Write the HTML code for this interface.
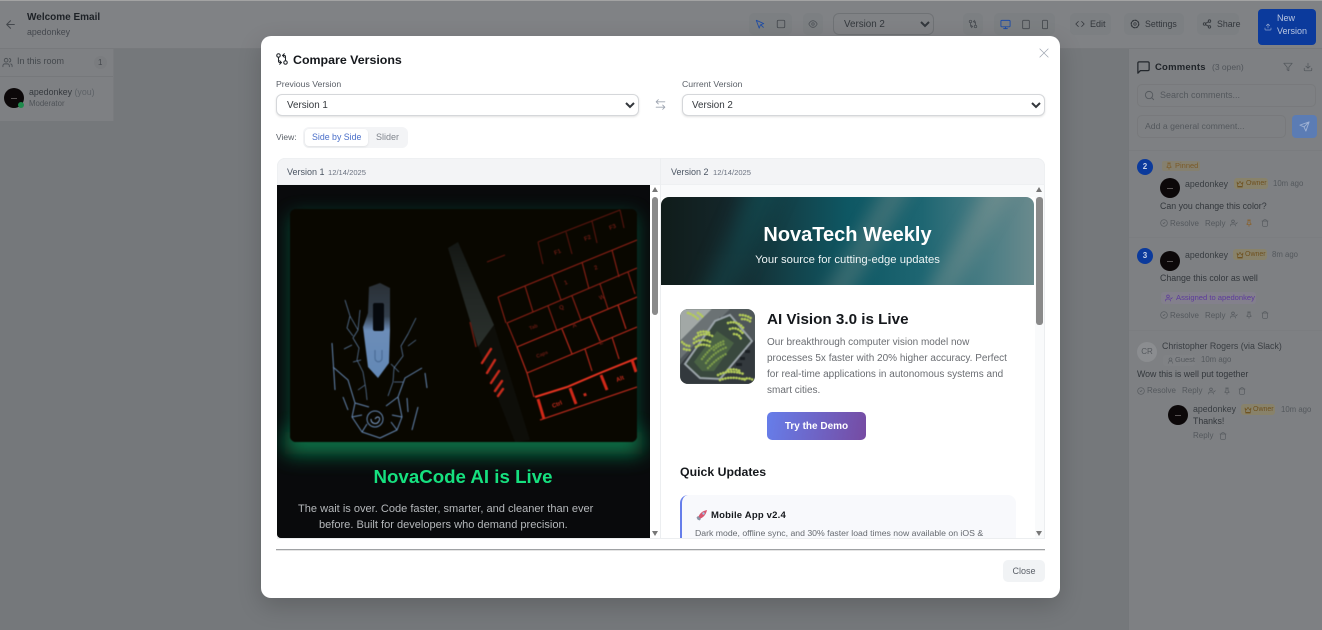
<!DOCTYPE html>
<html><head><meta charset="utf-8"><style>
*{box-sizing:border-box}
html,body{margin:0;padding:0;width:1322px;height:630px;overflow:hidden;background:#75787b;font-family:"Liberation Sans",sans-serif}
.a{position:absolute}
.t{position:absolute;white-space:nowrap;line-height:12px;height:12px}
svg.i{position:absolute;fill:none;stroke:currentColor;stroke-width:2;stroke-linecap:round;stroke-linejoin:round}
.btn{position:absolute;background:#7c7f82;border-radius:5px}
.av{position:absolute;border-radius:50%;background:#0c0809}
.av:after{content:"";position:absolute;left:37%;top:48%;width:26%;height:5%;background:#5a5555}
.owner{position:absolute;height:11px;background:#88826a;border-radius:3px;font-size:7px;line-height:11px;color:#6f5220;padding-left:12px;white-space:nowrap}
</style></head><body>
<svg width="0" height="0" style="position:absolute"><defs>
<symbol id="compare" viewBox="0 0 24 24"><circle cx="18" cy="18" r="3"/><circle cx="6" cy="6" r="3"/><path d="M13 6h3a2 2 0 0 1 2 2v7"/><path d="M11 18H8a2 2 0 0 1-2-2V9"/><path d="M16 3l-3 3 3 3M8 21l3-3-3-3"/></symbol>
<symbol id="user" viewBox="0 0 24 24"><path d="M16 21v-2a4 4 0 0 0-4-4H6a4 4 0 0 0-4 4v2"/><circle cx="9" cy="7" r="4"/><path d="M22 11l-3 3-2-2"/></symbol>
<symbol id="pin" viewBox="0 0 24 24"><path d="M12 17v5M9 10.8V4h6v6.8l3 3.2v3H6v-3zM8 3h8"/></symbol>
<symbol id="trash" viewBox="0 0 24 24"><path d="M3 6h18M19 6v14a2 2 0 0 1-2 2H7a2 2 0 0 1-2-2V6M8 6V4a2 2 0 0 1 2-2h4a2 2 0 0 1 2 2v2"/></symbol>
<symbol id="check" viewBox="0 0 24 24"><circle cx="12" cy="12" r="10"/><path d="M9 12l2 2 4-4"/></symbol>
<symbol id="crown" viewBox="0 0 24 24"><path d="M3 6l4 6 5-8 5 8 4-6-2 13H5zM5 21h14"/></symbol>
</defs></svg>

<!-- page behind -->
<div class="a" style="left:0;top:0;width:1322px;height:49px;background:#808285;border-top:1.5px solid #a3a3a3;border-bottom:1px solid #77797c"></div>
<svg class="i" style="left:4px;top:18px;color:#44484d" width="13" height="13" viewBox="0 0 24 24"><path d="M19 12H5M12 19l-7-7 7-7"/></svg>
<div class="t" style="left:27px;top:12px;font-size:10px;font-weight:bold;color:#1d2126">Welcome Email</div>
<div class="t" style="left:27px;top:26px;font-size:8.8px;color:#44484e">apedonkey</div>

<div class="btn" style="left:749px;top:13px;width:43px;height:22px"></div>
<svg class="i" style="left:755px;top:19px;color:#1e4ca6" width="10" height="10" viewBox="0 0 24 24"><path d="M3 3l7 19 3-8 8-3zM14 14l6 6"/></svg>
<svg class="i" style="left:776px;top:19px;color:#44484d" width="10" height="10" viewBox="0 0 24 24"><rect x="3" y="3" width="18" height="18" rx="3"/></svg>
<div class="btn" style="left:803px;top:13px;width:20px;height:22px"></div>
<svg class="i" style="left:808px;top:19px;color:#4f5358" width="10" height="10" viewBox="0 0 24 24"><path d="M2 12s4-8 10-8 10 8 10 8-4 8-10 8-10-8-10-8z"/><circle cx="12" cy="12" r="3"/></svg>
<select class="a" style="left:833px;top:13px;width:101px;height:22px;background:#808285;border:1px solid #6f7275;border-radius:6px;color:#33373c;font:9.8px 'Liberation Sans',sans-serif;padding-left:6px"><option>Version 2</option></select>
<div class="btn" style="left:963px;top:13px;width:20px;height:22px"></div>
<svg class="i" style="left:968px;top:19px;color:#4a4e53" width="10" height="10"><use href="#compare"/></svg>
<div class="btn" style="left:994px;top:13px;width:61px;height:22px"></div>
<svg class="i" style="left:1000px;top:19px;color:#1e4ca6" width="11" height="11" viewBox="0 0 24 24"><rect x="2" y="3" width="20" height="14" rx="2"/><path d="M8 21h8M12 17v4"/></svg>
<svg class="i" style="left:1021px;top:19px;color:#44484d" width="10" height="11" viewBox="0 0 24 24"><rect x="4" y="2" width="16" height="20" rx="2"/></svg>
<svg class="i" style="left:1040px;top:19px;color:#44484d" width="10" height="11" viewBox="0 0 24 24"><rect x="6" y="2" width="12" height="20" rx="2"/></svg>
<div class="btn" style="left:1070px;top:13px;width:41px;height:22px"></div>
<svg class="i" style="left:1075px;top:19px;color:#33373c" width="10" height="10" viewBox="0 0 24 24"><path d="M8 6l-6 6 6 6M16 6l6 6-6 6"/></svg>
<div class="t" style="left:1090px;top:17.5px;font-size:9px;color:#33373c">Edit</div>
<div class="btn" style="left:1124px;top:13px;width:60px;height:22px"></div>
<svg class="i" style="left:1130px;top:19px;color:#33373c;stroke-width:1.6" width="10" height="10" viewBox="0 0 24 24"><circle cx="12" cy="12" r="3"/><circle cx="12" cy="12" r="9" stroke-dasharray="4 3" stroke-width="3"/></svg>
<div class="t" style="left:1145px;top:17.5px;font-size:8.8px;color:#33373c">Settings</div>
<div class="btn" style="left:1197px;top:13px;width:42px;height:22px"></div>
<svg class="i" style="left:1202px;top:19px;color:#33373c" width="10" height="10" viewBox="0 0 24 24"><circle cx="18" cy="5" r="3"/><circle cx="6" cy="12" r="3"/><circle cx="18" cy="19" r="3"/><path d="M8.6 13.5l6.8 4M15.4 6.5l-6.8 4"/></svg>
<div class="t" style="left:1217px;top:17.5px;font-size:8.8px;color:#33373c">Share</div>
<div class="a" style="left:1258px;top:9px;width:58px;height:36px;background:#0b3a9c;border-radius:4px"></div>
<svg class="i" style="left:1264px;top:23px;color:#8ea3cf" width="8" height="8" viewBox="0 0 24 24"><path d="M21 15v4a2 2 0 0 1-2 2H5a2 2 0 0 1-2-2v-4M12 15V3M7 8l5-5 5 5"/></svg>
<div class="t" style="left:1277px;top:11.5px;font-size:9px;color:#b9c6e1">New</div>
<div class="t" style="left:1277px;top:24.5px;font-size:9px;color:#b9c6e1">Version</div>

<!-- left sidebar -->
<div class="a" style="left:0;top:49px;width:114px;height:72px;background:#7e8083;border-right:1px solid #797b7e"></div>
<div class="a" style="left:0;top:76px;width:113px;height:1px;background:#76787b"></div>
<svg class="i" style="left:2px;top:57px;color:#4c5055" width="11" height="11" viewBox="0 0 24 24"><path d="M16 21v-2a4 4 0 0 0-4-4H6a4 4 0 0 0-4 4v2"/><circle cx="9" cy="7" r="4"/><path d="M22 21v-2a4 4 0 0 0-3-3.9M16 3.1a4 4 0 0 1 0 7.8"/></svg>
<div class="t" style="left:17px;top:55px;font-size:9px;color:#44484d">In this room</div>
<div class="a" style="left:94px;top:56px;width:13px;height:13px;border-radius:7px;background:#7a7c7f"></div>
<div class="t" style="left:98px;top:57px;font-size:8px;color:#44484d">1</div>
<div class="av" style="left:4px;top:88px;width:20px;height:20px"></div>
<div class="a" style="left:18px;top:102px;width:6px;height:6px;border-radius:50%;background:#1f8a4c"></div>
<div class="t" style="left:29px;top:86px;font-size:8.8px;color:#35393e">apedonkey <span style="color:#5e6267">(you)</span></div>
<div class="t" style="left:29px;top:98px;font-size:7.8px;color:#4f5358">Moderator</div>

<!-- comments panel -->
<div class="a" style="left:1128px;top:49px;width:194px;height:581px;background:#7e8083;border-left:1px solid #74777a"></div>
<svg class="i" style="left:1136px;top:60px;color:#23272c" width="15" height="15" viewBox="0 0 24 24"><path d="M21 15a2 2 0 0 1-2 2H7l-4 4V5a2 2 0 0 1 2-2h14a2 2 0 0 1 2 2z"/></svg>
<div class="t" style="left:1155px;top:62px;font-size:9.5px;font-weight:bold;color:#202429;letter-spacing:.2px">Comments</div>
<div class="t" style="left:1212px;top:61px;font-size:8.5px;color:#50545a">(3 open)</div>
<svg class="i" style="left:1283px;top:62px;color:#55595e" width="10" height="10" viewBox="0 0 24 24"><path d="M22 3H2l8 9.5V19l4 2v-8.5z"/></svg>
<svg class="i" style="left:1303px;top:62px;color:#55595e" width="10" height="10" viewBox="0 0 24 24"><path d="M21 15v4a2 2 0 0 1-2 2H5a2 2 0 0 1-2-2v-4M7 10l5 5 5-5M12 15V3"/></svg>
<div class="a" style="left:1137px;top:84px;width:179px;height:23px;border:1px solid #78797c;border-radius:5px"></div>
<svg class="i" style="left:1144px;top:90px;color:#55595e" width="11" height="11" viewBox="0 0 24 24"><circle cx="11" cy="11" r="8"/><path d="M21 21l-4.3-4.3"/></svg>
<div class="t" style="left:1160px;top:89px;font-size:9px;color:#54585d">Search comments...</div>
<div class="a" style="left:1137px;top:115px;width:149px;height:23px;border:1px solid #78797c;border-radius:5px"></div>
<div class="t" style="left:1145px;top:120px;font-size:8.7px;color:#54585d">Add a general comment...</div>
<div class="a" style="left:1292px;top:115px;width:25px;height:23px;background:#5b7cb4;border-radius:4px"></div>
<svg class="i" style="left:1299px;top:121px;color:#9fb2d4" width="11" height="11" viewBox="0 0 24 24"><path d="M22 2L15 22l-4-9-9-4zM22 2L11 13"/></svg>
<div class="a" style="left:1129px;top:150px;width:193px;height:1px;background:#7a7c7f"></div>

<div class="a" style="left:1137px;top:159px;width:16px;height:16px;border-radius:50%;background:#0b3a9c;color:#c7d2e8;font:bold 8px/16px 'Liberation Sans';text-align:center">2</div>
<div class="a" style="left:1162px;top:161px;width:38px;height:10px;background:#85806f;border-radius:2px"></div>
<svg class="i" style="left:1165px;top:162px;color:#7b5a28" width="8" height="8"><use href="#pin"/></svg>
<div class="t" style="left:1175px;top:160px;font-size:7.5px;color:#7b5a28">Pinned</div>
<div class="av" style="left:1160px;top:178px;width:20px;height:20px"></div>
<div class="t" style="left:1185px;top:177.5px;font-size:8.8px;color:#393d42">apedonkey</div>
<div class="owner" style="left:1234px;top:178px;width:34px">Owner</div>
<svg class="i" style="left:1236px;top:180px;color:#6f5220" width="8" height="8"><use href="#crown"/></svg>
<div class="t" style="left:1273px;top:178px;font-size:7.8px;color:#54585d">10m ago</div>
<div class="t" style="left:1160px;top:200px;font-size:8.8px;color:#33373c">Can you change this color?</div>
<svg class="i" style="left:1160px;top:219px;color:#54585d" width="8" height="8"><use href="#check"/></svg>
<div class="t" style="left:1170px;top:218px;font-size:8px;color:#54585d">Resolve</div>
<div class="t" style="left:1205px;top:218px;font-size:8px;color:#54585d">Reply</div>
<svg class="i" style="left:1230px;top:219px;color:#54585d" width="8" height="8"><use href="#user"/></svg>
<svg class="i" style="left:1245px;top:219px;color:#8a5c22" width="8" height="8"><use href="#pin"/></svg>
<svg class="i" style="left:1261px;top:219px;color:#54585d" width="8" height="8"><use href="#trash"/></svg>
<div class="a" style="left:1129px;top:237px;width:193px;height:1px;background:#7b7d80"></div>

<div class="a" style="left:1137px;top:248px;width:16px;height:16px;border-radius:50%;background:#0b3a9c;color:#c7d2e8;font:bold 8px/16px 'Liberation Sans';text-align:center">3</div>
<div class="av" style="left:1160px;top:251px;width:20px;height:20px"></div>
<div class="t" style="left:1185px;top:249px;font-size:8.8px;color:#393d42">apedonkey</div>
<div class="owner" style="left:1233px;top:249px;width:34px">Owner</div>
<svg class="i" style="left:1236px;top:251px;color:#6f5220" width="8" height="8"><use href="#crown"/></svg>
<div class="t" style="left:1272px;top:249px;font-size:7.8px;color:#54585d">8m ago</div>
<div class="t" style="left:1160px;top:271.5px;font-size:8.8px;color:#33373c">Change this color as well</div>
<div class="a" style="left:1161px;top:292px;width:95px;height:12px;background:#83808c;border-radius:3px"></div>
<svg class="i" style="left:1165px;top:294px;color:#5d3a9c" width="8" height="8"><use href="#user"/></svg>
<div class="t" style="left:1176px;top:292px;font-size:7.6px;color:#5d3a9c">Assigned to apedonkey</div>
<svg class="i" style="left:1160px;top:311px;color:#54585d" width="8" height="8"><use href="#check"/></svg>
<div class="t" style="left:1170px;top:310px;font-size:8px;color:#54585d">Resolve</div>
<div class="t" style="left:1205px;top:310px;font-size:8px;color:#54585d">Reply</div>
<svg class="i" style="left:1230px;top:311px;color:#54585d" width="8" height="8"><use href="#user"/></svg>
<svg class="i" style="left:1245px;top:311px;color:#54585d" width="8" height="8"><use href="#pin"/></svg>
<svg class="i" style="left:1261px;top:311px;color:#54585d" width="8" height="8"><use href="#trash"/></svg>
<div class="a" style="left:1129px;top:330px;width:193px;height:1px;background:#7b7d80"></div>

<div class="a" style="left:1137px;top:342px;width:20px;height:20px;border-radius:50%;background:#8b8d90;color:#54585d;font:8px/20px 'Liberation Sans';text-align:center">CR</div>
<div class="t" style="left:1162px;top:340px;font-size:8.8px;color:#393d42">Christopher Rogers (via Slack)</div>
<div class="a" style="left:1163px;top:355px;width:32px;height:11px;background:#808285;border-radius:3px"></div>
<svg class="i" style="left:1167px;top:357px;color:#54585d" width="7" height="7" viewBox="0 0 24 24"><circle cx="12" cy="8" r="5"/><path d="M4 22a8 8 0 0 1 16 0"/></svg>
<div class="t" style="left:1175px;top:354px;font-size:7.5px;color:#54585d">Guest</div>
<div class="t" style="left:1201px;top:354px;font-size:7.8px;color:#54585d">10m ago</div>
<div class="t" style="left:1137px;top:368px;font-size:8.8px;color:#33373c">Wow this is well put together</div>
<svg class="i" style="left:1137px;top:387px;color:#54585d" width="8" height="8"><use href="#check"/></svg>
<div class="t" style="left:1147px;top:385px;font-size:8px;color:#54585d">Resolve</div>
<div class="t" style="left:1182px;top:385px;font-size:8px;color:#54585d">Reply</div>
<svg class="i" style="left:1208px;top:387px;color:#54585d" width="8" height="8"><use href="#user"/></svg>
<svg class="i" style="left:1223px;top:387px;color:#54585d" width="8" height="8"><use href="#pin"/></svg>
<svg class="i" style="left:1238px;top:387px;color:#54585d" width="8" height="8"><use href="#trash"/></svg>
<div class="av" style="left:1168px;top:405px;width:20px;height:20px"></div>
<div class="t" style="left:1193px;top:403px;font-size:8.8px;color:#393d42">apedonkey</div>
<div class="owner" style="left:1241px;top:404px;width:34px">Owner</div>
<svg class="i" style="left:1244px;top:406px;color:#6f5220" width="8" height="8"><use href="#crown"/></svg>
<div class="t" style="left:1281px;top:404px;font-size:7.8px;color:#54585d">10m ago</div>
<div class="t" style="left:1193px;top:415px;font-size:8.8px;color:#33373c">Thanks!</div>
<div class="t" style="left:1193px;top:430px;font-size:8px;color:#54585d">Reply</div>
<svg class="i" style="left:1219px;top:432px;color:#54585d" width="8" height="8"><use href="#trash"/></svg>

<!-- modal -->
<div class="a" style="left:261px;top:36px;width:799px;height:562px;background:#fff;border-radius:10px;box-shadow:0 8px 24px rgba(0,0,0,.18)"></div>
<svg class="i" style="left:275px;top:52px;color:#22262b;stroke-width:1.8" width="14" height="14"><use href="#compare"/></svg>
<div class="t" style="left:293px;top:53.5px;font-size:12.4px;font-weight:bold;color:#15181c">Compare Versions</div>
<svg class="i" style="left:1039px;top:48px;color:#9ca3af;stroke-width:1.6" width="10" height="10" viewBox="0 0 24 24"><path d="M2 2l20 20M22 2L2 22"/></svg>
<div class="t" style="left:276px;top:78px;font-size:8.7px;color:#5b6068">Previous Version</div>
<div class="t" style="left:682px;top:78px;font-size:8.7px;color:#5b6068">Current Version</div>
<select class="a" style="left:276px;top:94px;width:363px;height:22px;background:#fff;border:1px solid #d5d7da;border-radius:6px;box-shadow:0 1px 2px rgba(0,0,0,.12);color:#33373c;font:9.8px 'Liberation Sans',sans-serif;padding-left:6px"><option>Version 1</option></select>
<select class="a" style="left:682px;top:94px;width:363px;height:22px;background:#fff;border:1px solid #d5d7da;border-radius:6px;box-shadow:0 1px 2px rgba(0,0,0,.12);color:#33373c;font:9.8px 'Liberation Sans',sans-serif;padding-left:5px"><option>Version 2</option></select>
<svg class="i" style="left:654px;top:98px;color:#9ca3af;stroke-width:1.6" width="13" height="13" viewBox="0 0 24 24"><path d="M8 3L4 7l4 4M4 7h16M16 21l4-4-4-4M20 17H4"/></svg>
<div class="t" style="left:276px;top:131px;font-size:8.5px;color:#5b6068">View:</div>
<div class="a" style="left:303px;top:127px;width:105px;height:21px;background:#f3f4f6;border-radius:6px"></div>
<div class="a" style="left:305px;top:129px;width:63px;height:17px;background:#fff;border-radius:4px;box-shadow:0 1px 2px rgba(0,0,0,.08)"></div>
<div class="t" style="left:312px;top:131px;font-size:8.8px;color:#4a6fc9">Side by Side</div>
<div class="t" style="left:376px;top:131px;font-size:9px;color:#80858d">Slider</div>

<div class="a" style="left:277px;top:158px;width:768px;height:381px;border:1px solid #eceef0;border-radius:8px 8px 0 0;background:#fff"></div>
<div class="a" style="left:277px;top:158px;width:768px;height:27px;background:#f3f4f6;border:1px solid #eef0f2;border-radius:8px 8px 0 0"></div>
<div class="a" style="left:660px;top:158px;width:1px;height:381px;background:#eceef0"></div>
<div class="t" style="left:287px;top:166px;font-size:9px;color:#4b5563">Version 1</div>
<div class="t" style="left:328px;top:166.5px;font-size:7.6px;color:#6b7280">12/14/2025</div>
<div class="t" style="left:671px;top:166px;font-size:9px;color:#4b5563">Version 2</div>
<div class="t" style="left:713px;top:166.5px;font-size:7.6px;color:#6b7280">12/14/2025</div>

<!-- left hero -->
<div class="a" style="left:277px;top:185px;width:373px;height:353px;overflow:hidden;background:#0a0a0b;border-radius:0 0 0 4px">
<svg class="a" style="left:-277px;top:-185px;filter:blur(.4px)" width="1322" height="630">
<defs>
<filter id="gl" x="-20%" y="-20%" width="140%" height="140%"><feGaussianBlur stdDeviation="9"/></filter>
<filter id="gl2" x="-20%" y="-150%" width="140%" height="400%"><feGaussianBlur stdDeviation="10"/></filter>
<linearGradient id="wh" x1="0" y1="0" x2="0" y2="1"><stop offset="0" stop-color="#2a3036"/><stop offset=".35" stop-color="#333f4c"/><stop offset=".5" stop-color="#6c8db8"/><stop offset="1" stop-color="#6288b6"/></linearGradient>
<linearGradient id="st" x1="0" y1="0" x2="0" y2="1"><stop offset="0" stop-color="#141714"/><stop offset=".5" stop-color="#222724"/><stop offset="1" stop-color="#2a302c"/></linearGradient>
<clipPath id="hc"><rect x="290" y="209" width="347" height="233" rx="6"/></clipPath>
</defs>
<rect x="277" y="185" width="373" height="353" fill="#090a0c"/>
<rect x="290" y="214" width="347" height="228" rx="6" fill="#0f7a52" filter="url(#gl)" opacity=".55"/>
<rect x="285" y="432" width="357" height="22" fill="#109058" filter="url(#gl2)" opacity=".8"/>
<rect x="290" y="209" width="347" height="233" rx="6" fill="#0a0800"/>
<g clip-path="url(#hc)">
<rect x="290" y="209" width="347" height="233" fill="#090700"/>
<polygon points="448,248 458,242 494,325 478,347" fill="url(#st)"/>
<polygon points="478,347 494,325 530,440 515,442" fill="#0e0e09"/>
<g stroke="#c62a1b" stroke-width="2.4" stroke-linecap="round"><path d="M482 363l9-14M487 373l8-13M491 383l8-12M495 391l7-10M498 396l5-7"/></g>
<path d="M470 322l6 25" stroke="#6a1a10" stroke-width="1.5"/>
<g fill="none" stroke="#5e160e" stroke-width="1"><path d="M487 262l18-7M538 242l82-32M538 242l5 22M566 232l6 22M592 221l5 22M620 210l4 18"/></g>
<g fill="none" stroke="#8c2015" stroke-width="1.1">
<path d="M498 297l139-57M507 323l130-55"/>
<path d="M498 297l8 26M525 286l8 26M552 275l9 25M582 262l7 27M612 250l7 27"/>
<path d="M507 323l10 24M548 306l9 25M572 296l9 24M600 284l8 25M628 272l7 22"/>
</g>
<g fill="none" stroke="#b2281a" stroke-width="1.2">
<path d="M517 347l120-50M527 373l110-46M540 420l97-33"/>
<path d="M517 347l10 26M562 329l10 25M590 317l10 24M618 305l8 24"/>
<path d="M527 373l7 24M585 349l7 22M612 337l7 22"/>
</g>
<g fill="none" stroke="#e23320" stroke-width="2"><path d="M535 397l32-10 33-14 37-15"/></g>
<g fill="none" stroke="#d02818" stroke-width="3"><path d="M538 399l6 20M570 388l6 16M601 375l6 15M632 360l4 12"/></g>
<g fill="#6d1c13" font-family="Liberation Sans,sans-serif" font-size="6" font-weight="bold">
<text transform="translate(553 408) rotate(-22)" fill="#c82c1c">Ctrl</text>
<text transform="translate(584 397) rotate(-22)" fill="#c82c1c">■</text>
<text transform="translate(617 382) rotate(-22)" fill="#c82c1c">Alt</text>
<text transform="translate(537 358) rotate(-22)" font-size="5">Caps</text>
<text transform="translate(530 330) rotate(-22)" font-size="5">Tab</text>
<text transform="translate(600 345) rotate(-22)" font-size="6">Z</text>
<text transform="translate(560 310) rotate(-22)" font-size="6">Q</text>
<text transform="translate(573 328) rotate(-22)" font-size="6">A</text>
<text transform="translate(600 300) rotate(-22)" font-size="6">W</text>
<text transform="translate(595 270) rotate(-22)" font-size="6">2</text>
<text transform="translate(565 285) rotate(-22)" font-size="6">1</text>
<text transform="translate(555 255) rotate(-22)" font-size="6">F1</text>
<text transform="translate(585 241) rotate(-22)" font-size="6">F2</text>
<text transform="translate(610 230) rotate(-22)" font-size="6">F3</text>
</g>
<polygon points="369,287 380,283 390,288 390,330 389,363 378,378 368,367 363,327 368,313" fill="url(#wh)"/>
<rect x="373" y="303" width="11" height="28" rx="2" fill="#06090d"/>
<path d="M375 350v8c0 5 7 5 7 0v-8" fill="none" stroke="#4a6c96" stroke-width="1.2"/>
<g fill="none" stroke="#6486b0" stroke-width="1" stroke-linejoin="round">
<path d="M332 343l3 47M425 373l2 15M418 407l-6 23"/>
<path d="M333 367l15 13 7 23-3 14 10 15 18 6 17-8 5-13-4-20 7-19 17-10"/>
<path d="M343 397l5 13M407 398l1 14"/>
<path d="M355 403l14 4M398 397l-12 9M352 417l10-2M402 417l-10-2M362 432l5-8M397 430l-6-8"/>
<circle cx="375" cy="419" r="8"/>
</g>
<path d="M375 419c3-4 6-1 4 2-2 4-8 3-8-2" fill="none" stroke="#7fa0cc" stroke-width="1"/>
<g fill="none" stroke="#5c7a9e" stroke-width=".75" stroke-linejoin="round">
<path d="M345 300l5 16 8 14-5 8 6 10-2 12 6 12 3 18 1 10M350 316l-3 12 6 8M358 330l2-20M352 345l-8 4M361 360l-8 2M365 385l-7 5"/>
<path d="M416 318l-8 16-7 12 2 10-9 12-1 14-5 14M408 346l8-6M399 372l-8-8M394 382l10 0"/>
</g>
</g>
</svg>
<div class="t" style="left:0;top:281px;width:373px;height:22px;line-height:22px;text-align:center;font-size:18.7px;font-weight:bold;color:#16e07f;text-indent:-1px">NovaCode AI is Live</div>
<div class="t" style="left:21px;top:316px;font-size:11.05px;line-height:16px;height:16px;color:#b5b8bb">The wait is over. Code faster, smarter, and cleaner than ever</div>
<div class="t" style="left:42px;top:332px;font-size:11.05px;line-height:16px;height:16px;color:#b5b8bb">before. Built for developers who demand precision.</div>
</div>

<!-- left scrollbar -->
<div class="a" style="left:652px;top:197px;width:6px;height:118px;background:#8a8a8a;border-radius:3px"></div>
<div class="a" style="left:652px;top:187px;width:0;height:0;border:3.5px solid transparent;border-top:0;border-bottom:5px solid #777"></div>
<div class="a" style="left:652px;top:531px;width:0;height:0;border:3.5px solid transparent;border-bottom:0;border-top:5px solid #777"></div>

<!-- right email -->
<div class="a" style="left:661px;top:185px;width:383px;height:353px;overflow:hidden;background:#f9fafb">
<div class="a" style="left:0;top:0;width:374px;height:353px;background:#fff"></div>
<div class="a" style="left:0;top:0;width:374px;height:12px;background:#f9fafb"></div>
<div class="a" style="left:0;top:12px;width:373px;height:88px;border-radius:8px 8px 0 0;overflow:hidden;background:linear-gradient(90deg,#101c1a 0,#14262a 18%,#13424a 35%,#0e5763 50%,#1e6672 70%,#4c7e85 88%,#6a8a8d 100%)">
<div class="a" style="left:62px;top:-30px;width:26px;height:170px;transform:rotate(24deg);background:#14686e;opacity:.35;filter:blur(11px)"></div>
<div class="a" style="left:188px;top:-30px;width:24px;height:170px;transform:rotate(30deg);background:#b9a89a;opacity:.24;filter:blur(8px)"></div>
<div class="a" style="left:290px;top:-30px;width:24px;height:170px;transform:rotate(30deg);background:#c7b4a4;opacity:.22;filter:blur(8px)"></div>
<div class="t" style="left:0;top:25px;width:373px;height:26px;line-height:26px;text-align:center;font-size:20px;font-weight:bold;color:#fff">NovaTech Weekly</div>
<div class="t" style="left:0;top:56px;width:373px;height:14px;line-height:14px;text-align:center;font-size:11.3px;color:#eef4f5">Your source for cutting-edge updates</div>
</div>
<div class="a" style="left:19px;top:124px;width:75px;height:75px;border-radius:8px;overflow:hidden;background:#5f6a66">
<svg width="75" height="75" viewBox="0 0 75 75" style="display:block;filter:blur(.6px)">
<rect width="75" height="75" fill="#50575a"/><polygon points="0,0 32,0 0,32" fill="#a2a8a6"/><polygon points="32,0 50,0 0,50 0,32" fill="#6b7274"/>
<polygon points="0,75 0,56 40,8 75,32 75,75" fill="#33393d"/>
<polygon points="5,55 35,12 50,6 72,32 40,70 20,69" fill="#39483e" stroke="#9aa3a8" stroke-width="2"/>
<polygon points="14,53 37,22 54,34 34,62 22,62" fill="#4a6244"/>
<g fill="none" stroke-linecap="round" stroke-dasharray=".1 2.7">
<g stroke="#b4cc58" stroke-width="2.6"><path d="M14 30c6-6 14-6 20-2M14 34c6-4 12-4 18 0M16 38c4-3 8-3 14-1M18 24c3-2 8-2 12 0"/><path d="M48 14c6-2 12 0 16 6M50 20c5-2 10 0 14 6M54 25c4 0 6 2 7 5M60 6c4 0 8 1 12 4M62 10c4 0 7 1 10 4"/><path d="M38 66c8-4 16-4 26-1M40 71c8-3 16-3 26 0M48 61c4-1 8-1 12 1M64 70c3-1 6-1 9 1"/><path d="M8 4c3 1 7 3 10 6M18 4c2 1 3 2 5 4"/><path d="M2 33c2 2 4 4 8 4M4 40c2 1 4 1 6 1"/></g>
<g stroke="#7d9c4a" stroke-width="2.4"><path d="M22 50c6-8 12-14 22-18M26 54c6-8 14-14 22-16M28 59c6-6 10-10 18-14M34 41c3-3 6-5 10-6"/></g>
</g>
<g fill="#1b2024"><rect x="60" y="48" width="5" height="3"/><rect x="56" y="54" width="6" height="3"/><rect x="65" y="41" width="5" height="3"/></g>
</svg></div>
<div class="t" style="left:106px;top:125px;height:20px;line-height:20px;font-size:15.2px;font-weight:bold;color:#15181c">AI Vision 3.0 is Live</div>
<div class="t" style="left:106px;top:150px;height:16px;line-height:16px;font-size:10px;color:#6a6d72">Our breakthrough computer vision model now</div>
<div class="t" style="left:106px;top:166px;height:16px;line-height:16px;font-size:10px;color:#6a6d72">processes 5x faster with 20% higher accuracy. Perfect</div>
<div class="t" style="left:106px;top:182px;height:16px;line-height:16px;font-size:10px;color:#6a6d72">for real-time applications in autonomous systems and</div>
<div class="t" style="left:106px;top:198px;height:16px;line-height:16px;font-size:10px;color:#6a6d72">smart cities.</div>
<div class="a" style="left:106px;top:227px;width:99px;height:28px;border-radius:5px;background:linear-gradient(100deg,#667eea,#764ba2);color:#fff;font:bold 10px/30px 'Liberation Sans';text-align:center">Try the Demo</div>
<div class="t" style="left:19px;top:280px;height:15px;line-height:15px;font-size:12.3px;font-weight:bold;color:#15181c">Quick Updates</div>
<div class="a" style="left:19px;top:310px;width:336px;height:70px;background:#f8f9fc;border-left:2px solid #667eea;border-radius:8px"></div>
<svg class="a" style="left:35px;top:323px" width="13" height="13" viewBox="0 0 13 13"><path d="M2 10c1-4 4-7 9-8-1 5-4 8-8 9z" fill="#d9566f"/><circle cx="7.5" cy="5.5" r="1.2" fill="#9ec9e8"/><path d="M2 8L0.5 9.5 1.5 11.5 3.5 12.5 5 11" fill="#8a94a6"/></svg>
<div class="t" style="left:50px;top:325px;font-size:9.5px;font-weight:bold;color:#15181c;letter-spacing:.2px">Mobile App v2.4</div>
<div class="t" style="left:34px;top:341.5px;font-size:8.7px;color:#666a70">Dark mode, offline sync, and 30% faster load times now available on iOS &amp;</div>
</div>
<div class="a" style="left:1036px;top:197px;width:7px;height:128px;background:#8a8a8a;border-radius:3px"></div>
<div class="a" style="left:1036px;top:187px;width:0;height:0;border:3.5px solid transparent;border-top:0;border-bottom:5px solid #777"></div>
<div class="a" style="left:1036px;top:531px;width:0;height:0;border:3.5px solid transparent;border-bottom:0;border-top:5px solid #777"></div>

<div class="a" style="left:276px;top:549px;width:769px;height:1px;background:#a0a2a4"></div>
<div class="a" style="left:276px;top:550px;width:769px;height:1px;background:#e4e4e4"></div>
<div class="a" style="left:1003px;top:560px;width:42px;height:22px;background:#f1f3f5;border-radius:5px;color:#5b6068;font:9px/23px 'Liberation Sans';text-align:center">Close</div>
</body></html>
